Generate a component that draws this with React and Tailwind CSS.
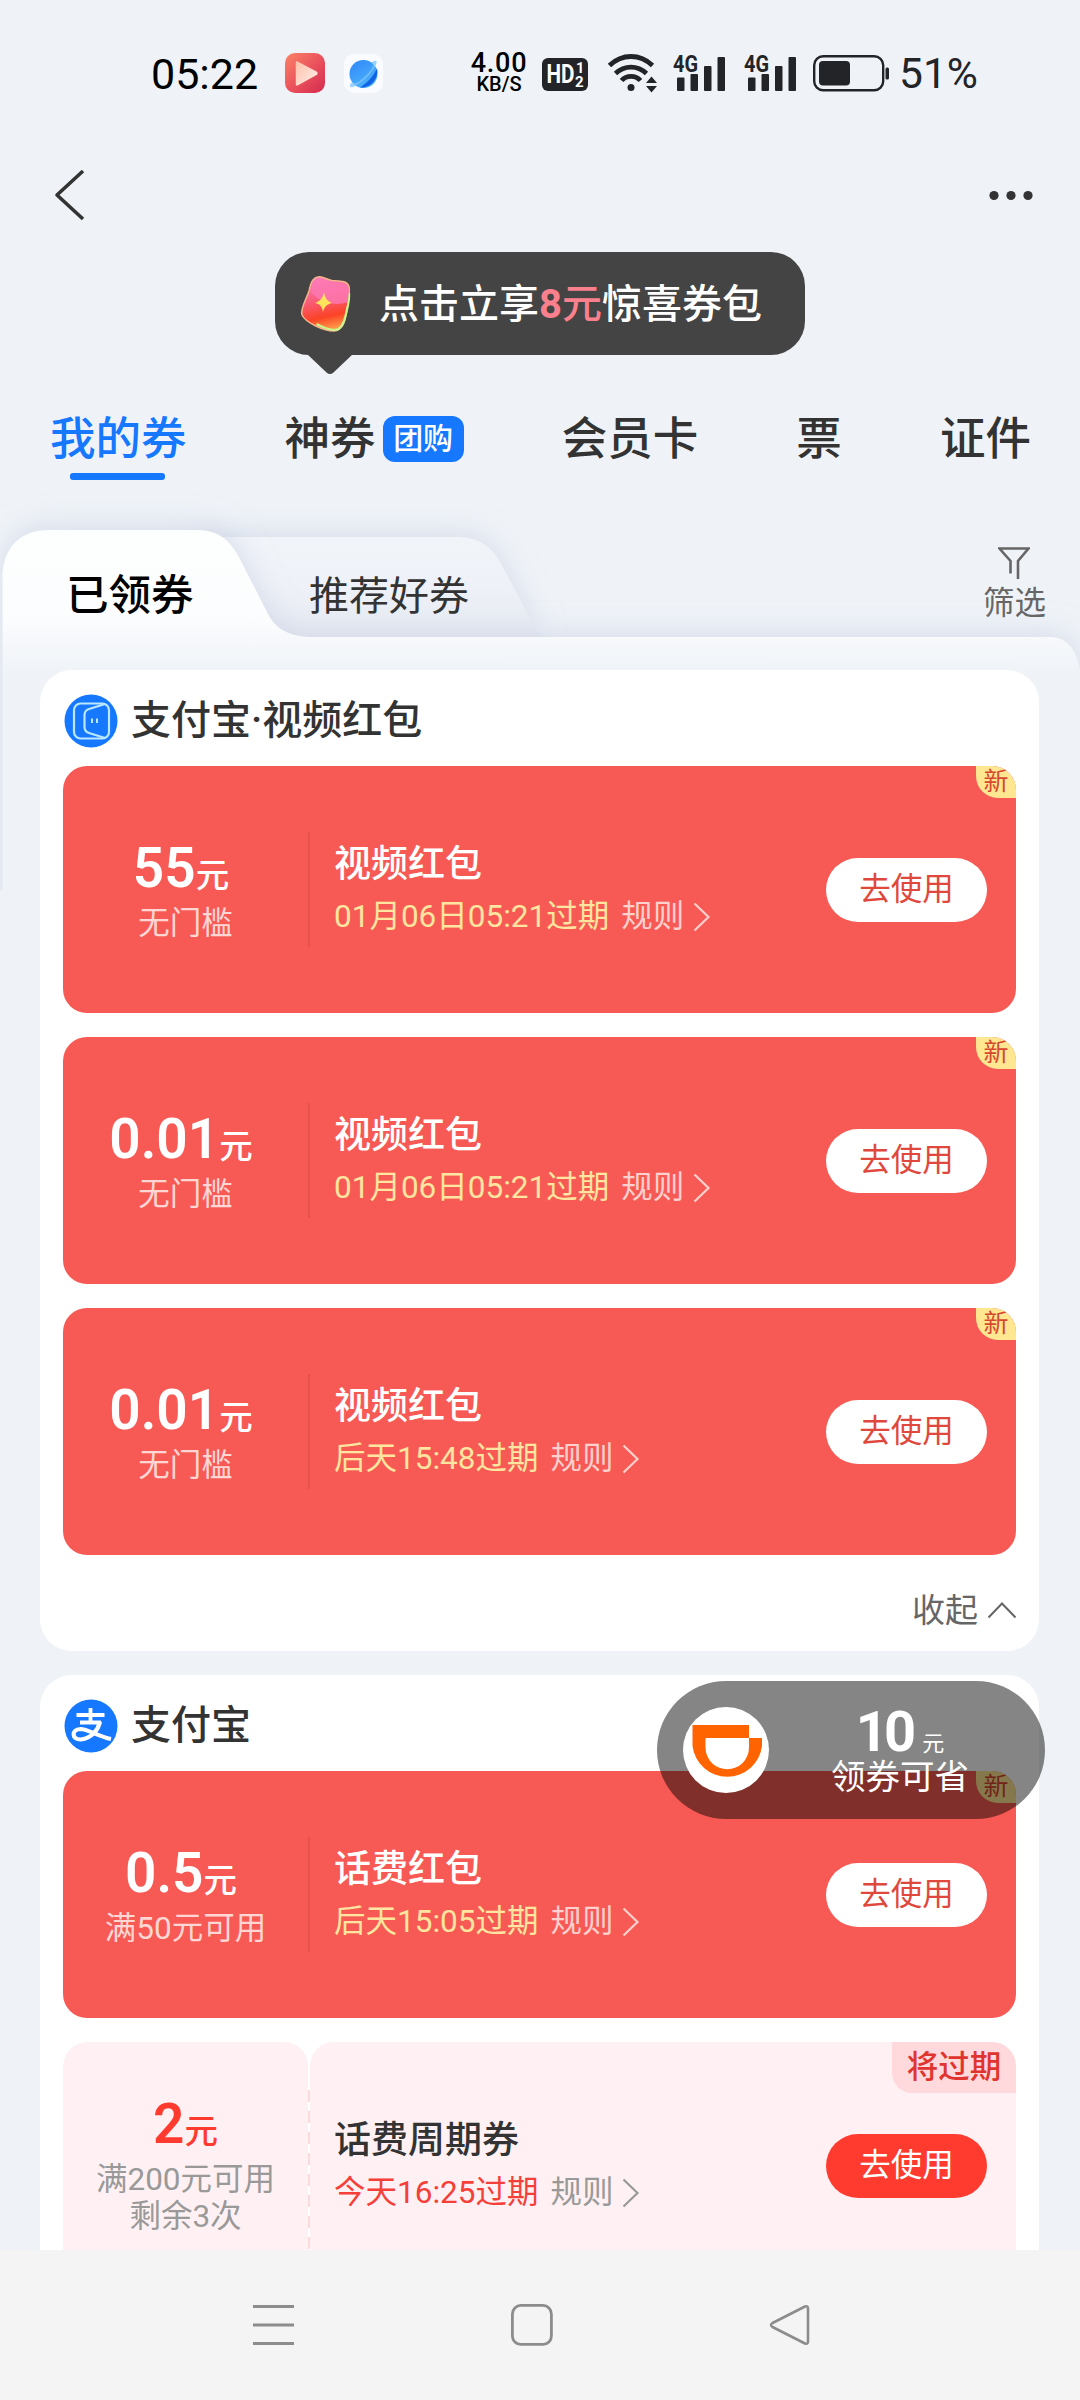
import clsx from "clsx";

const videoCoupons = [
  { amount: "55", limit: ["无门槛"], title: "视频红包", expire: "01月06日05:21过期", tag: "新" },
  { amount: "0.01", limit: ["无门槛"], title: "视频红包", expire: "01月06日05:21过期", tag: "新" },
  { amount: "0.01", limit: ["无门槛"], title: "视频红包", expire: "后天15:48过期", tag: "新" },
];

const alipayCoupons = [
  { amount: "0.5", limit: ["满50元可用"], title: "话费红包", expire: "后天15:05过期", tag: "新" },
  {
    amount: "2",
    limit: ["满200元可用", "剩余3次"],
    title: "话费周期券",
    expire: "今天16:25过期",
    tag: "将过期",
    light: true,
  },
];

const Signal = () => (
  <svg width="54" height="50" viewBox="0 -6 54 50" fill="#222427">
    <text x="0" y="18" fontSize="23" fontWeight="700" textLength="25" lengthAdjust="spacingAndGlyphs">
      4G
    </text>
    <rect x="4" y="23.5" width="7.5" height="13.5" rx="1" />
    <rect x="17.5" y="20" width="7.5" height="17" rx="1" />
    <rect x="31" y="12" width="7.5" height="25" rx="1" />
    <rect x="44.5" y="3" width="7.5" height="34" rx="1" />
  </svg>
);

const StatusBar = () => (
  <div className="flex h-[146px] shrink-0 items-center pl-[151px] text-black">
    <span className="w-[134px] pt-[2px] text-[43px] leading-none">05:22</span>
    <svg width="40" height="40" viewBox="0 0 40 40">
      <defs>
        <linearGradient id="play" x1="0" y1="0" x2="1" y2="1">
          <stop offset="0" stopColor="#fb8467" />
          <stop offset="0.55" stopColor="#e94f5c" />
          <stop offset="1" stopColor="#d42a4e" />
        </linearGradient>
        <linearGradient id="tri" x1="0" y1="0" x2="1" y2="1">
          <stop offset="0" stopColor="#fdc3ac" />
          <stop offset="1" stopColor="#ffece6" />
        </linearGradient>
      </defs>
      <rect width="40" height="40" rx="10" fill="url(#play)" />
      <path d="M12 9.500 31 19.500a1 1 0 0 1 0 1.500L12 31.500Z" fill="url(#tri)" stroke="url(#tri)" strokeWidth="2.500" strokeLinejoin="round" />
    </svg>
    <svg className="ml-[19px]" width="39" height="39" viewBox="0 0 39 39">
      <defs>
        <linearGradient id="planet" x1="0" y1="0" x2="0.6" y2="1">
          <stop offset="0" stopColor="#2f86f8" />
          <stop offset="1" stopColor="#4db4fb" />
        </linearGradient>
      </defs>
      <rect width="39" height="39" rx="10" fill="#f9fbfe" />
      <circle cx="19.500" cy="20" r="14" fill="url(#planet)" />
      <path d="M33 14.500C35 24 27 34.500 16 33.500 23 29 29 23 33 14.500Z" fill="#1262e6" />
      <path d="M27 8.500c4-2.500 6.500-2.500 5.500.5C30 17 20 28.500 9 33c-3 1-4-.5-2-4 3 0 5 .5 8-1.500C21 23 27 17 29 12c.5-2-.5-3-2-3.500Z" fill="#7cc6fd" opacity=".75" />
    </svg>
    <div className="ml-[86px] flex w-[60px] flex-col items-center font-medium leading-none">
      <span className="text-[27px] leading-[23px] tracking-[0.8px]">4.00</span>
      <span className="text-[20px] leading-[19px]">KB/S</span>
    </div>
    <svg className="ml-[13px] mt-[3px]" width="46" height="33" viewBox="0 0 46 33">
      <rect width="46" height="33" rx="6" fill="#222427" />
      <g fill="#fff" fontWeight="700">
        <text x="4.500" y="25" fontSize="25" textLength="28" lengthAdjust="spacingAndGlyphs">HD</text>
        <text x="34" y="14.500" fontSize="14.500">1</text>
        <text x="33" y="28.500" fontSize="15">2</text>
      </g>
    </svg>
    <svg className="ml-[20px]" width="50" height="40" viewBox="0 0 50 40" fill="none" stroke="#222427" strokeWidth="4.800">
      <path d="M1.500 12.500C14 .5 32 .5 44.500 12.500" />
      <path d="M7.500 20.500c9-8.500 22-8.500 31 0" />
      <path d="M13.500 27.500c5-5.500 14-5.500 19 0" />
      <circle cx="23" cy="34.500" r="3.500" fill="#222427" stroke="none" />
      <path d="m38 30 5.500-6.500L49 30ZM38 33l5.500 6.500L49 33Z" fill="#222427" stroke="none" />
    </svg>
    <div className="ml-[15px] flex gap-[17px]">
      <Signal />
      <Signal />
    </div>
    <svg className="ml-[15px]" width="77" height="37" viewBox="0 0 77 37">
      <rect x="1.200" y="1.200" width="69" height="34" rx="9" fill="none" stroke="#222427" strokeWidth="2.400" />
      <rect x="6" y="6" width="31" height="24.500" rx="4" fill="#222427" />
      <rect x="72.500" y="12.500" width="3.500" height="12" rx="1.500" fill="#222427" />
    </svg>
    <span className="ml-[9px] pt-[3px] text-[42.500px] leading-none text-[#222427]">51%</span>
  </div>
);

const NavBar = () => (
  <div className="flex h-[98px] shrink-0 items-center justify-between pl-[53px] pr-[46px]">
    <svg width="34" height="52" viewBox="0 0 34 52" fill="none" stroke="#333" strokeWidth="3.600">
      <path d="M30 2 4 26l26 24" strokeLinejoin="round" />
    </svg>
    <svg width="46" height="12" viewBox="0 0 46 12" fill="#333">
      <circle cx="6" cy="6.500" r="4.600" />
      <circle cx="23" cy="6.500" r="4.600" />
      <circle cx="40" cy="6.500" r="4.600" />
    </svg>
  </div>
);

const Tooltip = () => (
  <div className="relative ml-[275px] mt-[8px] flex h-[103px] w-[530px] shrink-0 items-center rounded-[34px] bg-[#444] pl-[23px]">
    <svg width="58" height="62" viewBox="0 0 58 62">
      <defs>
        <linearGradient id="packet" x1="0.3" y1="0" x2="0.5" y2="1">
          <stop offset="0" stopColor="#fd7fc0" />
          <stop offset="0.45" stopColor="#f95a72" />
          <stop offset="0.75" stopColor="#fb4326" />
          <stop offset="1" stopColor="#ffa04a" />
        </linearGradient>
      </defs>
      <path
        d="M20 4c5-1 8 2.500 14 3.500 8 .5 15 0 17 6 1.500 7-1 17-2.500 25C47 50 44 57.500 36 58 26 58 8 50 4 42c-2-6 4-15 7-24 1.500-7 3-13 9-14Z"
        fill="url(#packet)"
        stroke="#f5b58c"
        strokeWidth="1.500"
      />
      <path d="M51 20c1 8-2 16-3.500 23-2 9-5 14-11 14-6 0-12-3-18-6" fill="none" stroke="#c9f58a" strokeWidth="2.200" />
      <path d="M13 19c7 10 25 15 37 10 0-5 2-11 0-15-3-5-9-4-15-4.500C27 8 23 4 20 5.500c-5 1-6 6-7 13.500Z" fill="#fc79b4" opacity=".8" />
      <path d="M26 19c1 6 3 9 8 11-5 1-8 4-9 9-1-6-3-8-8-9 5-2 8-5 9-11Z" fill="#ffe45c" />
    </svg>
    <p className="ml-[23px] pt-[2px] text-[40px] leading-none font-medium text-white">
      点击立享<span className="font-bold text-[#f9808c]">8</span>
      <span className="text-[#f9808c]">元</span>惊喜券包
    </p>
    <svg className="absolute left-[32px] top-[102px]" width="46" height="22" viewBox="0 0 46 22">
      <path d="M0 0h46L26.500 18.500q-3.500 3-7 0Z" fill="#444" />
    </svg>
  </div>
);

const MainTabs = () => (
  <div className="mt-[25px] flex h-[118px] shrink-0 items-center justify-between pl-[50px] pr-[49px] pt-[2px] text-[45.500px] leading-none font-medium text-[#333]">
    <div className="relative text-[#1677ff]">
      我的券
      <span className="absolute left-[20px] top-[56px] h-[7px] w-[95px] rounded-[3px] bg-[#1677ff]" />
    </div>
    <div className="flex items-center gap-[7px]">
      神券
      <span className="mt-[-2px] flex h-[46px] w-[81px] items-center justify-center rounded-[12px] bg-[#1677ff] text-[30px] text-white">
        团购
      </span>
    </div>
    <div>会员卡</div>
    <div>票</div>
    <div>证件</div>
  </div>
);

const FolderTabs = () => (
  <div className="relative flex h-[172px] shrink-0">
    {/* folder outline: second tab sits behind, active one continues into the page */}
    <svg className="absolute left-0 top-0 overflow-visible" width="1080" height="410" viewBox="0 498 1080 410">
      <defs>
        <linearGradient id="front" x1="0" y1="530" x2="0" y2="900" gradientUnits="userSpaceOnUse">
          <stop offset="0" stopColor="#fdfefe" />
          <stop offset="0.230" stopColor="#fcfdfe" />
          <stop offset="0.300" stopColor="#f6f8fb" />
          <stop offset="0.390" stopColor="#eff3f8" />
          <stop offset="1" stopColor="#eff3f8" />
        </linearGradient>
        <linearGradient id="back" x1="0" y1="537" x2="0" y2="637" gradientUnits="userSpaceOnUse">
          <stop offset="0" stopColor="#f1f4f9" />
          <stop offset="0.500" stopColor="#eef1f7" />
          <stop offset="1" stopColor="#e6eaf2" />
        </linearGradient>
        <filter id="soft" x="-10%" y="-30%" width="120%" height="160%">
          <feDropShadow dx="0" dy="-4" stdDeviation="14" floodColor="#c6cde0" floodOpacity="0.600" />
        </filter>
      </defs>
      <path d="M200 637V537h255c25 0 38 9 50 34l35 66Z" fill="url(#back)" filter="url(#soft)" />
      <path
        d="M2.500 1100V578c0-30 17-48 47-48h146c24 0 36 10 48 36l24 47c8 16 22 24 46 24h737c16 0 26 12 29.500 33v430Z"
        fill="url(#front)"
        filter="url(#soft)"
      />
      <rect x="0" y="890" width="1080" height="300" fill="#eff3f8" />
    </svg>
    <div className="relative flex h-[140px] w-full pt-[33px] text-[#333]">
      <span className="w-[242px] pl-[66px] pt-[44px] text-[42.500px] leading-none font-medium whitespace-nowrap text-black">已领券</span>
      <span className="pl-[67px] pt-[46px] text-[40px] leading-none">推荐好券</span>
      <div className="ml-auto flex flex-col items-center pr-[34px] pt-[14px] text-[#666]">
        <svg width="32" height="36" viewBox="0 0 32 36" fill="none" stroke="#666" strokeWidth="2.600">
          <path d="M12.500 28.500V16L1.500 3.500h29L20 16v18" />
        </svg>
        <span className="mt-[7px] text-[31.500px] leading-none">筛选</span>
      </div>
    </div>
  </div>
);

const VideoLogo = () => (
  <svg width="54" height="54" viewBox="0 0 54 54" fill="none" stroke="#b9e8ff" strokeWidth="2.200" strokeLinejoin="round">
    <circle cx="27" cy="27" r="26.500" fill="#1677ff" stroke="none" />
    <rect x="10" y="9.500" width="35" height="35" rx="6.500" />
    <path d="m41 10-16 5c-3 1-4.500 3-4.500 6v12c0 3 1.500 5 4.500 6l16 5" />
    <path d="M28 24.500v4.500M33 24.500v4.500" strokeWidth="2" />
  </svg>
);

const AlipayLogo = () => (
  <svg width="54" height="54" viewBox="0 0 54 54" fill="none" stroke="#fff" strokeWidth="4.200">
    <circle cx="27" cy="27" r="26.500" fill="#1677ff" stroke="none" />
    <path d="M12.500 16h28M26.500 9v14M16 23.500h21" strokeWidth="3.800" />
    <path d="M36 22.500C34.500 30 28 39.500 17 40.500c-9.500.5-10-10-.5-10.500C24 30 34 37.500 47 40" />
  </svg>
);

const Arrow = () => (
  <svg className="ml-[9px]" width="18" height="32" viewBox="0 0 18 32" fill="none" stroke="currentColor" strokeWidth="2.200">
    <path d="m1.500 2.500 14 13.500-14 13.500" />
  </svg>
);

const Coupon = ({ amount, limit, title, expire, tag, light }) => (
  <div
    className={clsx(
      "relative flex h-[247px] shrink-0 overflow-hidden rounded-[24px]",
      light ? "text-[#ff3b30]" : "bg-[#f75a54] text-white"
    )}
  >
    <div
      className={clsx(
        "flex w-[245px] flex-col items-center",
        light ? "rounded-[24px] bg-[#fff1f3] pt-[57px]" : "pt-[77px]"
      )}
    >
      <div className={clsx("flex items-baseline font-semibold", !light && "pr-[9px]")}>
        <span className="text-[55px] leading-[50px]">{amount}</span>
        <span className="text-[33.500px] leading-[50px] font-medium">元</span>
      </div>
      <div className={clsx("mt-[4px] text-[31.500px] leading-[37px]", light ? "text-[#999]" : "text-[#ffd6d3]")}>
        {limit.map((line) => (
          <p key={line} className="text-center">
            {line}
          </p>
        ))}
      </div>
    </div>
    {light ? (
      <svg className="mt-[48px]" width="2" height="200" viewBox="0 0 2 200">
        <path d="M1 0v200" stroke="#fbdadd" strokeWidth="2" strokeDasharray="12 9" />
      </svg>
    ) : (
      <div className="mt-[66px] h-[115px] w-[2px] bg-[#e8504a]" />
    )}
    <div className={clsx("flex flex-1 items-center pl-[24px] pr-[29px]", light && "rounded-[24px] bg-[#fff1f3]")}>
      <div className="pt-[3px]">
        <h3 className={clsx("text-[37px] leading-[48px] font-medium", light && "text-[#333]")}>{title}</h3>
        <div className="mt-[4px] flex items-center text-[31.500px] leading-[48px]">
          <span className={light ? "text-[#f5403a]" : "text-[#ffe5a0]"}>{expire}</span>
          <span className={clsx("ml-[12px] flex items-center", light ? "text-[#999]" : "text-[#ffd0cd]")}>
            规则
            <Arrow />
          </span>
        </div>
      </div>
      <button
        type="button"
        className={clsx(
          "ml-auto h-[64px] w-[161px] rounded-full pt-[1px] text-[31.500px] leading-none",
          light ? "bg-[#ff3b30] text-white" : "bg-white text-[#e0483e]"
        )}
      >
        去使用
      </button>
    </div>
    {light ? (
      <span className="absolute right-0 top-0 flex h-[51px] w-[124px] items-center justify-center rounded-bl-[20px] bg-[#ffd9dc] text-[31.500px] leading-none font-medium text-[#e0352f]">
        {tag}
      </span>
    ) : (
      <span className="absolute right-0 top-0 flex h-[32px] w-[40px] items-center justify-center rounded-bl-[22px] bg-[#ffe792] pb-[1px] text-[25px] leading-none text-[#d8472f]">
        {tag}
      </span>
    )}
  </div>
);

const Section = ({ logo, name, coupons, children }) => (
  <section className="mx-[40px] w-[999px] shrink-0 rounded-[32px] bg-white px-[23px]">
    <div className="flex h-[96px] items-center gap-[13px] pl-[1px] pt-[5px] text-[40px] leading-none font-medium text-[#333]">
      {logo}
      <span className="pt-[1px]">{name}</span>
    </div>
    <div className="flex flex-col gap-[24px]">
      {coupons.map((c, i) => (
        <Coupon key={i} {...c} />
      ))}
    </div>
    {children}
  </section>
);

const FloatingOffer = () => (
  <div className="absolute left-[657px] top-[1681px] flex h-[138px] w-[388px] items-center rounded-full bg-black/48 pl-[26px] text-white">
    <svg width="86" height="86" viewBox="0 0 86 86">
      <circle cx="43" cy="43" r="43" fill="#fff" />
      <path d="M9.500 18H66v13h13v8a35 35 0 0 1-69.500 0Z" fill="#ff6400" />
      <path d="M22.500 31H66v9.500a21.750 21.750 0 0 1-43.500 0Z" fill="#fff" />
    </svg>
    <div className="ml-[60px] flex w-[142px] flex-col items-center pt-[4px]">
      <div className="flex items-baseline">
        <span className="text-[56px] leading-[50px] font-bold tracking-[-4px]">10</span>
        <span className="ml-[10px] text-[22px] leading-none">元</span>
      </div>
      <span className="text-[34.500px] leading-[40px] whitespace-nowrap">领券可省</span>
    </div>
  </div>
);

const SystemNav = () => (
  <div className="flex h-[150px] shrink-0 items-center bg-[#f4f4f4] pl-[253px]">
    <svg width="41" height="44" viewBox="0 0 41 44" stroke="#8c8c8c" strokeWidth="3">
      <path d="M0 3.500h41M0 22h41M0 40.500h41" />
    </svg>
    <svg className="ml-[217px]" width="42" height="42" viewBox="0 0 42 42" fill="none" stroke="#8c8c8c" strokeWidth="2.800">
      <rect x="1.400" y="1.400" width="39" height="39" rx="8.500" />
    </svg>
    <svg className="ml-[216px]" width="42" height="42" viewBox="0 0 42 42" fill="none" stroke="#8c8c8c" strokeWidth="2.600" strokeLinejoin="round">
      <path d="M3.500 19 36 2.500q3-1 3 2v33q0 3-3 2L3.500 23q-3-2 0-4Z" />
    </svg>
  </div>
);

export default function App() {
  return (
    <div className="relative flex h-[2400px] w-[1080px] flex-col overflow-hidden bg-[#eff3f8] font-['Roboto','Noto_Sans_CJK_SC',sans-serif]">
      <div className="flex h-[2250px] shrink-0 flex-col overflow-hidden">
        <StatusBar />
        <NavBar />
        <Tooltip />
        <MainTabs />
        <FolderTabs />
        <main className="relative flex flex-col gap-[24px]">
          <Section logo={<VideoLogo />} name="支付宝·视频红包" coupons={videoCoupons}>
            <div className="flex h-[96px] items-center justify-end pt-[14px] text-[33px] leading-none text-[#666]">
              收起
              <svg className="ml-[10px]" width="28" height="18" viewBox="0 0 28 18" fill="none" stroke="#666" strokeWidth="2">
                <path d="M.5 16.500 14 2.500l13.500 14" />
              </svg>
            </div>
          </Section>
          <Section logo={<AlipayLogo />} name="支付宝" coupons={alipayCoupons} />
        </main>
      </div>
      <SystemNav />
      <FloatingOffer />
    </div>
  );
}
